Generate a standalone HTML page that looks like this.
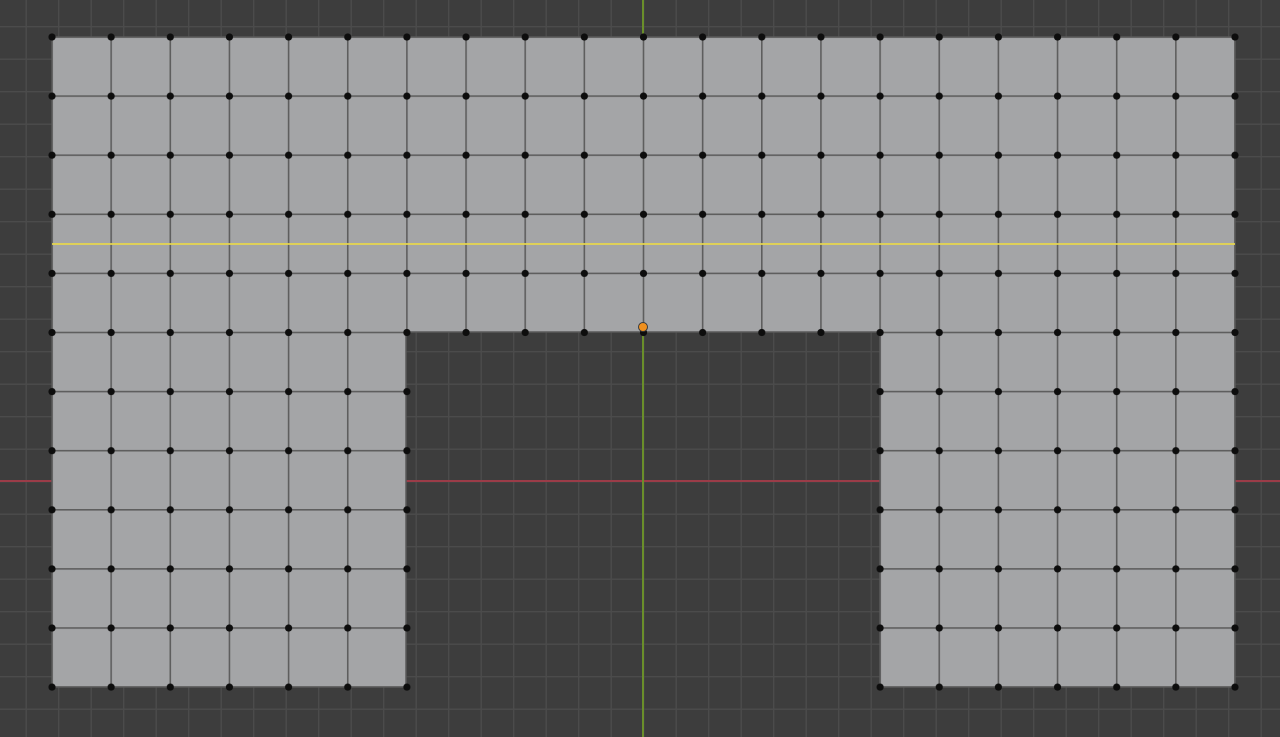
<!DOCTYPE html>
<html><head><style>html,body{margin:0;padding:0;background:#3d3d3d;overflow:hidden}svg{display:block}</style></head>
<body>
<svg width="1280" height="737" viewBox="0 0 1280 737" xmlns="http://www.w3.org/2000/svg">
<defs>
<pattern id="bg" x="25.5" y="26" width="32.5" height="32.5" patternUnits="userSpaceOnUse">
<rect width="32.5" height="32.5" fill="#3d3d3d"/>
<rect x="0" y="0" width="1.4" height="32.5" fill="#4b4b4b"/>
<rect x="0" y="0" width="32.5" height="1.4" fill="#4b4b4b"/>
</pattern>
<pattern id="edges" x="51.2" y="36.2" width="59.15" height="59.1" patternUnits="userSpaceOnUse">
<rect width="59.15" height="59.1" fill="#a4a5a7"/>
<rect x="0" y="0" width="1.6" height="59.1" fill="#5e5e5e"/>
<rect x="0" y="0" width="59.15" height="1.6" fill="#5e5e5e"/>
</pattern>
<pattern id="dots" x="52" y="37" width="59.15" height="59.1" patternUnits="userSpaceOnUse">
<circle cx="0" cy="0" r="3.6" fill="#0d0d0d"/>
<circle cx="59.15" cy="0" r="3.6" fill="#0d0d0d"/>
<circle cx="0" cy="59.1" r="3.6" fill="#0d0d0d"/>
<circle cx="59.15" cy="59.1" r="3.6" fill="#0d0d0d"/>
</pattern>
<clipPath id="mesh"><path d="M52 37H1235V687H880V332H406V687H52Z"/></clipPath>
<clipPath id="meshx"><path d="M47 32H1240V692H875V337H411V692H47Z"/></clipPath>
</defs>
<rect width="1280" height="737" fill="url(#bg)"/>
<line x1="0" y1="481" x2="1280" y2="481" stroke="#9b3c48" stroke-width="2"/>
<line x1="643" y1="0" x2="643" y2="737" stroke="#6a8f2a" stroke-width="2"/>
<rect x="0" y="0" width="1280" height="737" fill="url(#edges)" clip-path="url(#mesh)"/>
<path d="M52 37H1235V687H880V332H406V687H52Z" fill="none" stroke="#5a5a5a" stroke-width="1.5"/>
<line x1="52" y1="244" x2="1235" y2="244" stroke="#e6d64e" stroke-width="1.8"/>
<rect x="0" y="0" width="1280" height="737" fill="url(#dots)" clip-path="url(#meshx)"/>
<circle cx="643" cy="327" r="4.5" fill="#f0901e" stroke="#3a3a3a" stroke-width="1"/>
</svg>
</body></html>
